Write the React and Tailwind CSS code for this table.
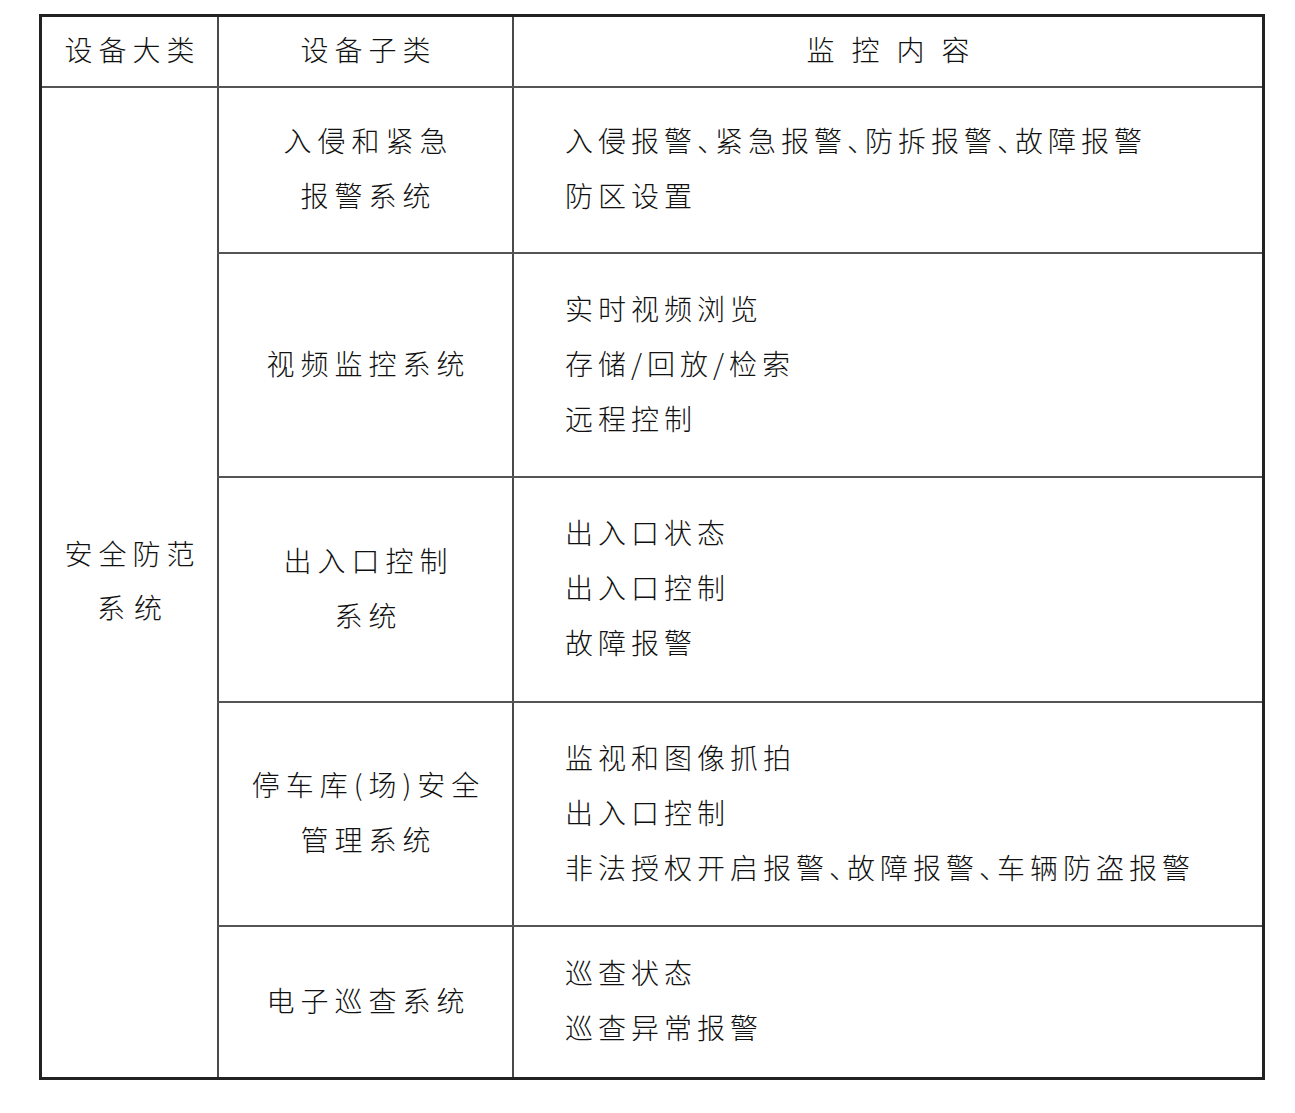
const font = { fontFamily: '"Noto Sans CJK SC", "Noto Sans", sans-serif' };

const rows = [
  {
    sub: ['入侵和紧急', '报警系统'],
    height: 'h-[166px]',
    items: [
      ['入侵报警', '、', '紧急报警', '、', '防拆报警', '、', '故障报警'],
      ['防区设置'],
    ],
  },
  {
    sub: ['视频监控系统'],
    height: 'h-[224px]',
    items: [['实时视频浏览'], ['存储/回放/检索'], ['远程控制']],
  },
  {
    sub: ['出入口控制', '系统'],
    height: 'h-[225px]',
    items: [['出入口状态'], ['出入口控制'], ['故障报警']],
  },
  {
    sub: ['停车库(场)安全', '管理系统'],
    height: 'h-[224px]',
    items: [
      ['监视和图像抓拍'],
      ['出入口控制'],
      ['非法授权开启报警', '、', '故障报警', '、', '车辆防盗报警'],
    ],
  },
  {
    sub: ['电子巡查系统'],
    height: 'h-[150px]',
    items: [['巡查状态'], ['巡查异常报警']],
    last: true,
  },
];

function ContentLine({ parts }) {
  return (
    <div className="whitespace-nowrap tracking-[5px]">
      {parts.map((p, i) =>
        p === '、' ? (
          <span key={i} className="tracking-[-10px]">、</span>
        ) : (
          <span key={i}>{p}</span>
        )
      )}
    </div>
  );
}

function Row({ row }) {
  return (
    <div className={`flex ${row.height} ${row.last ? '' : 'border-b-2 border-[#555]'}`}>
      <div className="w-[297px] shrink-0 border-x-2 border-[#4a4a4a] flex flex-col items-center justify-center pb-[4px] leading-[55px]">
        {row.sub.map((s) => (
          <div key={s} className="tracking-[6px] pl-[6px] whitespace-nowrap">{s}</div>
        ))}
      </div>
      <div className="flex-1 flex flex-col justify-center pl-[51px] pb-[4px] leading-[55px]">
        {row.items.map((parts, i) => (
          <ContentLine key={i} parts={parts} />
        ))}
      </div>
    </div>
  );
}

export default function App() {
  return (
    <div className="w-[1295px] h-[1113px] bg-white pt-[14px] pl-[39px] text-[#111] text-[28px] font-light" style={font}>
      <div className="w-[1226px] border-[3px] border-[#222]">
        {/* header */}
        <div className="flex h-[71px] border-b-2 border-[#555]">
          <div className="w-[175px] shrink-0 flex items-center justify-center pb-[6px]">
            <span className="tracking-[6px] pl-[6px]">设备大类</span>
          </div>
          <div className="w-[297px] shrink-0 border-x-2 border-[#4a4a4a] flex items-center justify-center pb-[6px]">
            <span className="tracking-[6px] pl-[6px]">设备子类</span>
          </div>
          <div className="flex-1 flex items-center justify-center pb-[6px]">
            <span className="tracking-[17px] pl-[17px]">监控内容</span>
          </div>
        </div>

        {/* body */}
        <div className="flex">
          <div className="w-[175px] shrink-0 flex flex-col items-center justify-center pb-[6px] leading-[54px]">
            <div className="tracking-[6px] pl-[6px]">安全防范</div>
            <div className="tracking-[9px] pl-[9px]">系统</div>
          </div>
          <div className="flex-1 flex flex-col">
            {rows.map((r, i) => (
              <Row key={i} row={r} />
            ))}
          </div>
        </div>
      </div>
    </div>
  );
}
